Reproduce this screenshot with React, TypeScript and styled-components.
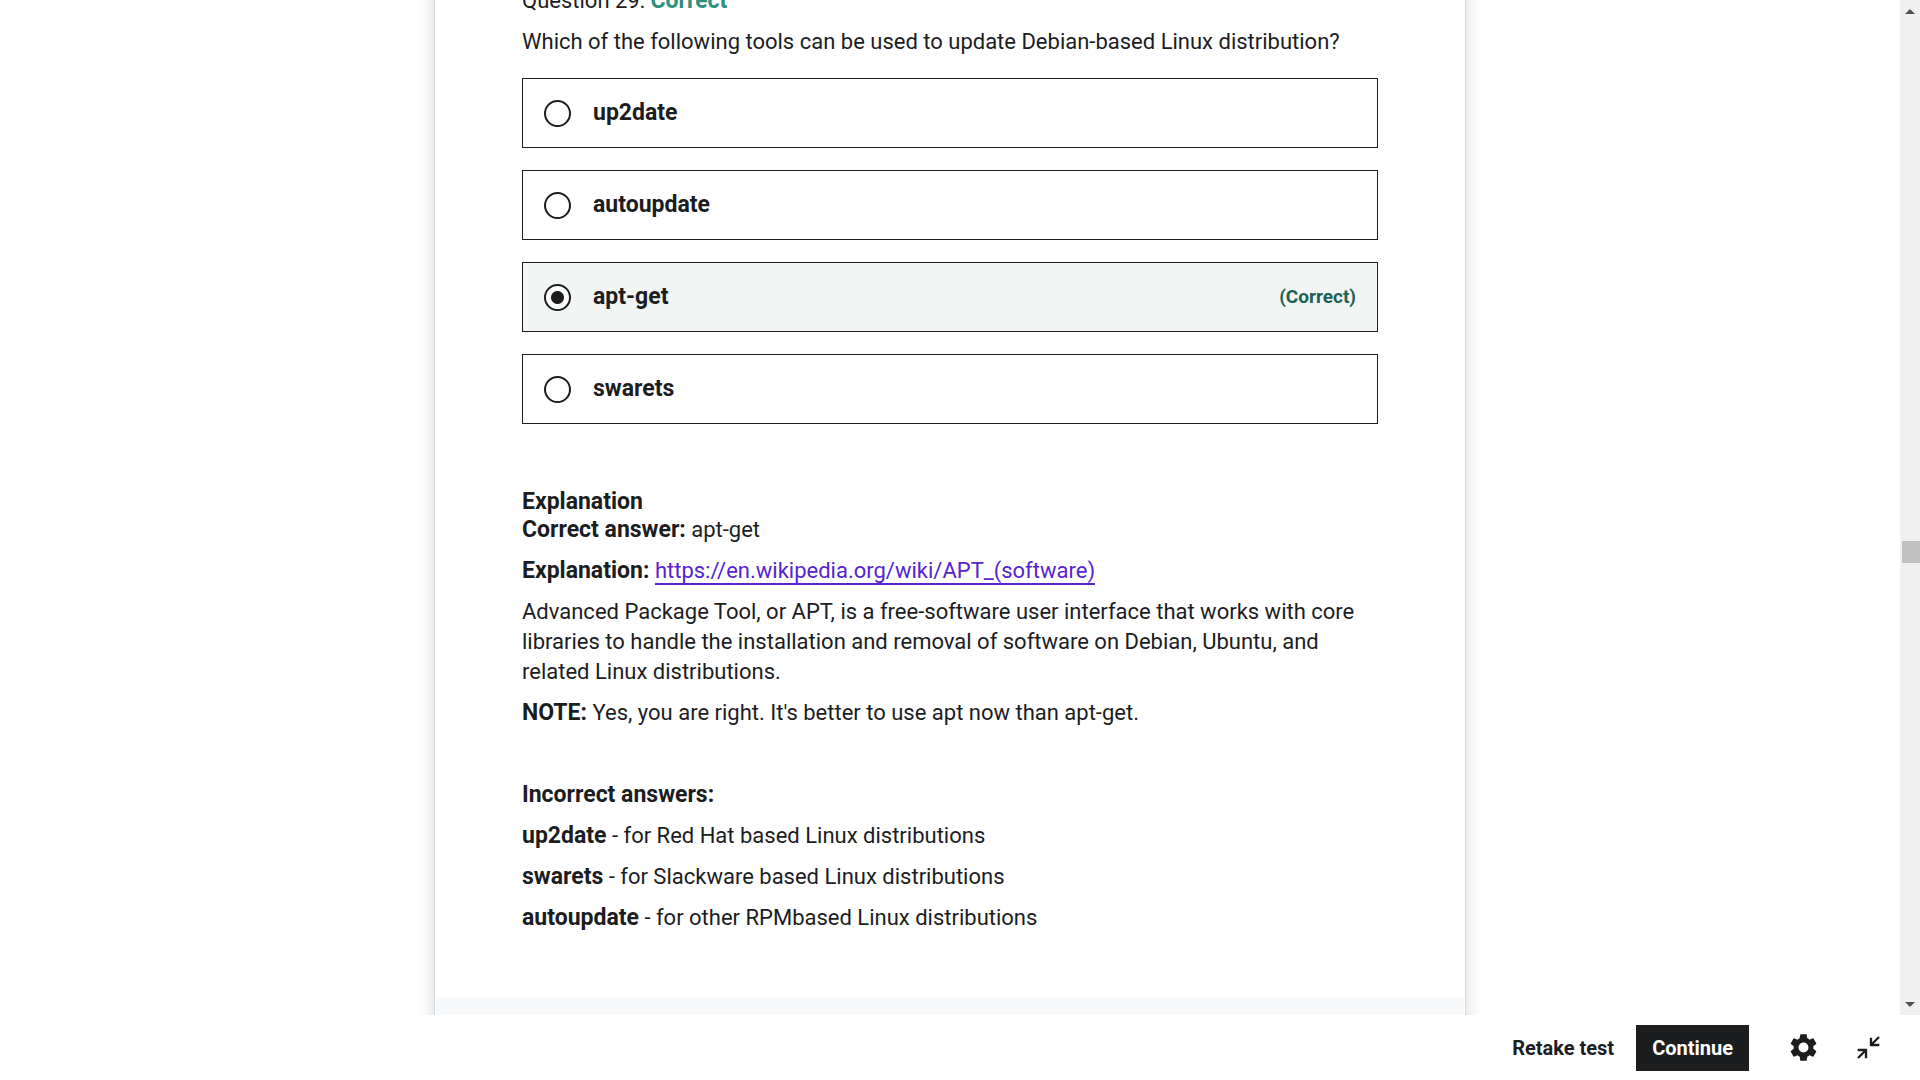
import React from "react";
import styled, { createGlobalStyle } from "styled-components";

const ink = "#1c1d1f";

const GlobalStyle = createGlobalStyle`
  *, *::before, *::after { box-sizing: border-box; }
  body {
    margin: 0;
    background: #fff;
    color: ${ink};
    font-family: Roboto, "Liberation Sans", sans-serif;
    font-size: 22px;
    line-height: 30px;
  }
`;

const Page = styled.div`
  display: flex;
  flex-direction: column;
  height: 100vh;
  overflow: hidden;
`;

const Viewport = styled.div`
  display: flex;
  flex: 1;
  min-height: 0;
`;

const Content = styled.main`
  display: flex;
  flex: 1;
  min-width: 0;
  justify-content: center;
  overflow: hidden;
`;

const Card = styled.article`
  flex: 0 1 1032px;
  align-self: flex-start;
  border: 1px solid #d1d7dc;
  background: #fff;
  box-shadow: 0 0 16px rgba(0, 0, 0, 0.16);
  margin-top: -15px;
`;

const Question = styled.section`
  padding: 0 87px 64px;
`;

const Paragraph = styled.p`
  margin: 0 0 11px;
  min-height: 30px;

  &:last-child { margin-bottom: 0; }
`;

const Strong = styled.strong`
  font-size: 23px;
  font-weight: 700;
`;

const Verdict = styled(Strong)`
  color: #2f8f7d;
`;

const Options = styled.fieldset`
  display: flex;
  flex-direction: column;
  gap: 22px;
  margin: 21px 0 65px;
  padding: 0;
  border: 0;
`;

const Option = styled.label<{ $correct?: boolean }>`
  display: flex;
  align-items: center;
  gap: 22px;
  height: 70px;
  padding: 0 21px;
  border: 1px solid ${ink};
  background: ${(p) => (p.$correct ? "#f1f5f4" : "#fff")};
`;

const Radio = styled.input`
  appearance: none;
  width: 27px;
  height: 27px;
  margin: 0;
  border: 2px solid ${ink};
  border-radius: 50%;
  background: #fff;

  &:checked {
    background: radial-gradient(circle, ${ink} 6px, #fff 7px);
  }
`;

const OptionText = styled.span`
  flex: 1;
  font-size: 23px;
  font-weight: 700;
`;

const CorrectTag = styled.span`
  color: #1e6055;
  font-size: 19px;
  font-weight: 700;
`;

const Heading = styled.h2`
  margin: 0;
  font-size: 23px;
  line-height: 26px;
  font-weight: 700;
`;

const Link = styled.a`
  color: #5624d0;
  text-decoration: none;
  border-bottom: 2px solid #5624d0;
`;

const NextQuestion = styled.div`
  height: 88px;
  margin: 0 1px;
  background: #f7f9fa;
`;

const Scrollbar = styled.div`
  display: grid;
  grid-template-rows: 22px 519fr 22px 430fr 22px;
  justify-items: end;
  width: 20px;
  background: #f0f0f0;
`;

const Thumb = styled.div`
  grid-row: 3;
  width: 18px;
  background: #c1c1c1;
`;

const Arrow = styled.svg<{ $end?: boolean }>`
  grid-row: ${(p) => (p.$end ? 5 : 1)};
  justify-self: center;
  align-self: center;
  width: 10px;
  height: 5px;
  fill: #505050;
`;

const Footer = styled.footer`
  display: flex;
  align-items: center;
  justify-content: flex-end;
  height: 65px;
  padding: 0 30px;
  background: #fff;
`;

const TextButton = styled.button<{ $filled?: boolean }>`
  height: 46px;
  padding: 0 ${(p) => (p.$filled ? 16 : 22)}px;
  border: 0;
  background: ${(p) => (p.$filled ? ink : "transparent")};
  color: ${(p) => (p.$filled ? "#fff" : ink)};
  font-family: inherit;
  font-size: 20px;
  font-weight: 700;
`;

const IconButton = styled.button`
  display: grid;
  place-items: center;
  width: 44px;
  height: 46px;
  padding: 0;
  border: 0;
  background: transparent;
  color: ${ink};
`;

const IconGroup = styled.div`
  display: flex;
  gap: 21px;
  margin-left: 32px;
`;

const GearIcon = styled.svg`
  width: 33px;
  height: 33px;
  fill: currentColor;
`;

const CollapseIcon = styled.svg`
  width: 23px;
  height: 23px;
  fill: none;
  stroke: currentColor;
  stroke-width: 7;
`;

const answers = [
  { text: "up2date" },
  { text: "autoupdate" },
  { text: "apt-get", correct: true },
  { text: "swarets" },
];

const incorrect = [
  ["up2date", "for Red Hat based Linux distributions"],
  ["swarets", "for Slackware based Linux distributions"],
  ["autoupdate", "for other RPMbased Linux distributions"],
];

export default function App() {
  return (
    <Page>
      <GlobalStyle />
      <Viewport>
        <Content>
          <Card>
            <Question>
              <Paragraph>
                Question 29: <Verdict>Correct</Verdict>
              </Paragraph>
              <Paragraph>
                Which of the following tools can be used to update Debian-based Linux distribution?
              </Paragraph>
              <Options aria-label="Answers">
                {answers.map((a) => (
                  <Option key={a.text} $correct={a.correct}>
                    <Radio type="radio" name="q29" defaultChecked={a.correct} />
                    <OptionText>{a.text}</OptionText>
                    {a.correct && <CorrectTag>(Correct)</CorrectTag>}
                  </Option>
                ))}
              </Options>
              <Heading>Explanation</Heading>
              <Paragraph>
                <Strong>Correct answer:</Strong> apt-get
              </Paragraph>
              <Paragraph>
                <Strong>Explanation:</Strong>{" "}
                <Link href="https://en.wikipedia.org/wiki/APT_(software)">
                  https://en.wikipedia.org/wiki/APT_(software)
                </Link>
              </Paragraph>
              <Paragraph>
                Advanced Package Tool, or APT, is a free-software user interface that works with core
                libraries to handle the installation and removal of software on Debian, Ubuntu, and
                related Linux distributions.
              </Paragraph>
              <Paragraph>
                <Strong>NOTE:</Strong> Yes, you are right. It's better to use apt now than apt-get.
              </Paragraph>
              <Paragraph />
              <Paragraph>
                <Strong>Incorrect answers:</Strong>
              </Paragraph>
              {incorrect.map(([name, reason]) => (
                <Paragraph key={name}>
                  <Strong>{name}</Strong> - {reason}
                </Paragraph>
              ))}
            </Question>
            <NextQuestion />
          </Card>
        </Content>
        <Scrollbar aria-hidden="true">
          <Arrow viewBox="0 0 10 5">
            <path d="M5 0L10 5H0Z" />
          </Arrow>
          <Thumb />
          <Arrow $end viewBox="0 0 10 5">
            <path d="M0 0H10L5 5Z" />
          </Arrow>
        </Scrollbar>
      </Viewport>
      <Footer>
        <TextButton type="button">Retake test</TextButton>
        <TextButton type="button" $filled>
          Continue
        </TextButton>
        <IconGroup>
          <IconButton type="button" aria-label="Settings">
            <GearIcon viewBox="0 0 24 24">
              <path d="M19.14 12.94c.04-.3.06-.61.06-.94 0-.32-.02-.64-.07-.94l2.03-1.58c.18-.14.23-.41.12-.61l-1.92-3.32c-.12-.22-.37-.29-.59-.22l-2.39.96c-.5-.38-1.03-.7-1.62-.94l-.36-2.54c-.04-.24-.24-.41-.48-.41h-3.84c-.24 0-.43.17-.47.41l-.36 2.54c-.59.24-1.13.57-1.62.94l-2.39-.96c-.22-.08-.47 0-.59.22L2.74 8.87c-.12.21-.08.47.12.61l2.03 1.58c-.05.3-.09.63-.09.94s.02.64.07.94l-2.03 1.58c-.18.14-.23.41-.12.61l1.92 3.32c.12.22.37.29.59.22l2.39-.96c.5.38 1.03.7 1.62.94l.36 2.54c.05.24.24.41.48.41h3.84c.24 0 .44-.17.47-.41l.36-2.54c.59-.24 1.13-.56 1.62-.94l2.39.96c.22.08.47 0 .59-.22l1.92-3.32c.12-.22.07-.47-.12-.61l-2.01-1.58zM12 15.6c-1.98 0-3.6-1.62-3.6-3.6s1.62-3.6 3.6-3.6 3.6 1.62 3.6 3.6-1.62 3.6-3.6 3.6z" />
            </GearIcon>
          </IconButton>
          <IconButton type="button" aria-label="Exit expanded view">
            <CollapseIcon viewBox="0 0 69 69">
              <path d="M42 5V27H67M42 27L66 3M2 42H27V67M27 42L3 66" />
            </CollapseIcon>
          </IconButton>
        </IconGroup>
      </Footer>
    </Page>
  );
}
